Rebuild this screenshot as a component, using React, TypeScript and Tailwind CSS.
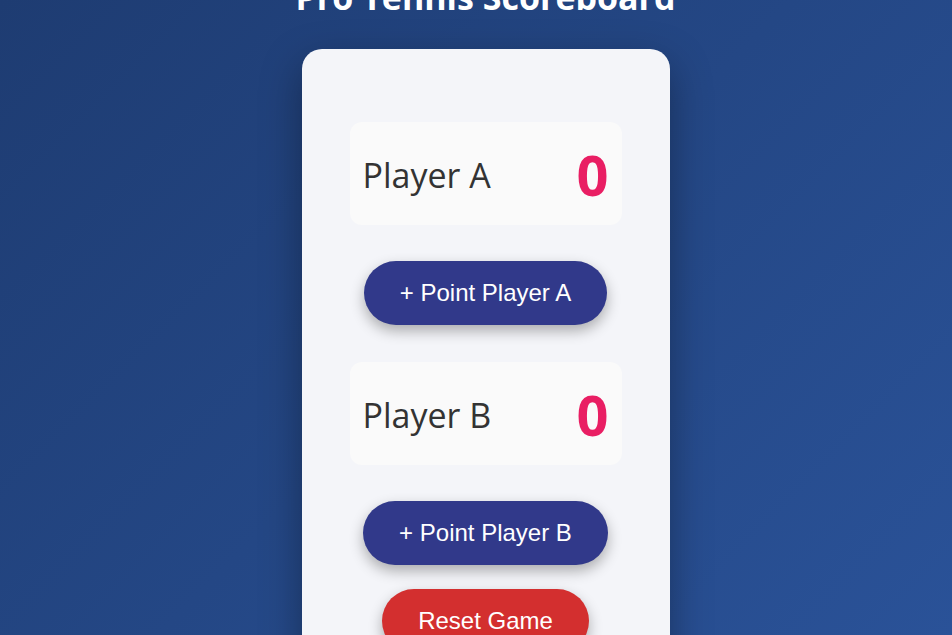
import React, { useState } from 'react';

const font = { fontFamily: '"Open Sans", "Noto Sans", sans-serif' };

interface PlayerProps {
  name: string;
  score: number;
  onPoint: () => void;
  label: string;
}

const PlayerBlock: React.FC<PlayerProps> = ({ name, score, onPoint, label }) => {
  return (
    <div className="flex flex-col items-center">
      <div className="w-full h-[103px] rounded-xl bg-[#fafafa] px-[13px] flex items-center justify-between">
        <span className="text-[34px] text-[#333333] pt-1">{name}</span>
        <span className="text-[56px] font-bold text-[#e91e63] leading-none">{score}</span>
      </div>
      <button
        onClick={onPoint}
        className="mt-9 h-16 px-9 rounded-full bg-[#31398a] text-white text-[24px] shadow-[0_6px_14px_rgba(0,0,0,0.3)] font-['Liberation_Sans',Arial,sans-serif]"
      >
        {label}
      </button>
    </div>
  );
};

export default function App() {
  const [a, setA] = useState(0);
  const [b, setB] = useState(0);

  return (
    <div
      className="w-full h-screen overflow-hidden bg-[linear-gradient(135deg,#1e3c72,#2a5298)] flex flex-col items-center pl-[19px]"
      style={font}
    >
      <h1 className="mt-[-20px] text-[34px] leading-none font-bold text-white mb-[35px] whitespace-nowrap">
        Pro Tennis Scoreboard
      </h1>
      <div className="w-[368px] rounded-[20px] bg-[#f4f5f9] px-12 pt-[73px] pb-12 shadow-[0_15px_40px_rgba(0,0,0,0.35)] flex flex-col">
        <PlayerBlock name="Player A" score={a} onPoint={() => setA(a + 1)} label="+ Point Player A" />
        <div className="h-[37px]" />
        <PlayerBlock name="Player B" score={b} onPoint={() => setB(b + 1)} label="+ Point Player B" />
        <div className="flex justify-center mt-6">
          <button
            onClick={() => {
              setA(0);
              setB(0);
            }}
            className="h-16 px-9 rounded-full bg-[#d32f2f] text-white text-[24px] shadow-[0_6px_14px_rgba(0,0,0,0.3)] font-['Liberation_Sans',Arial,sans-serif]"
          >
            Reset Game
          </button>
        </div>
      </div>
    </div>
  );
}
